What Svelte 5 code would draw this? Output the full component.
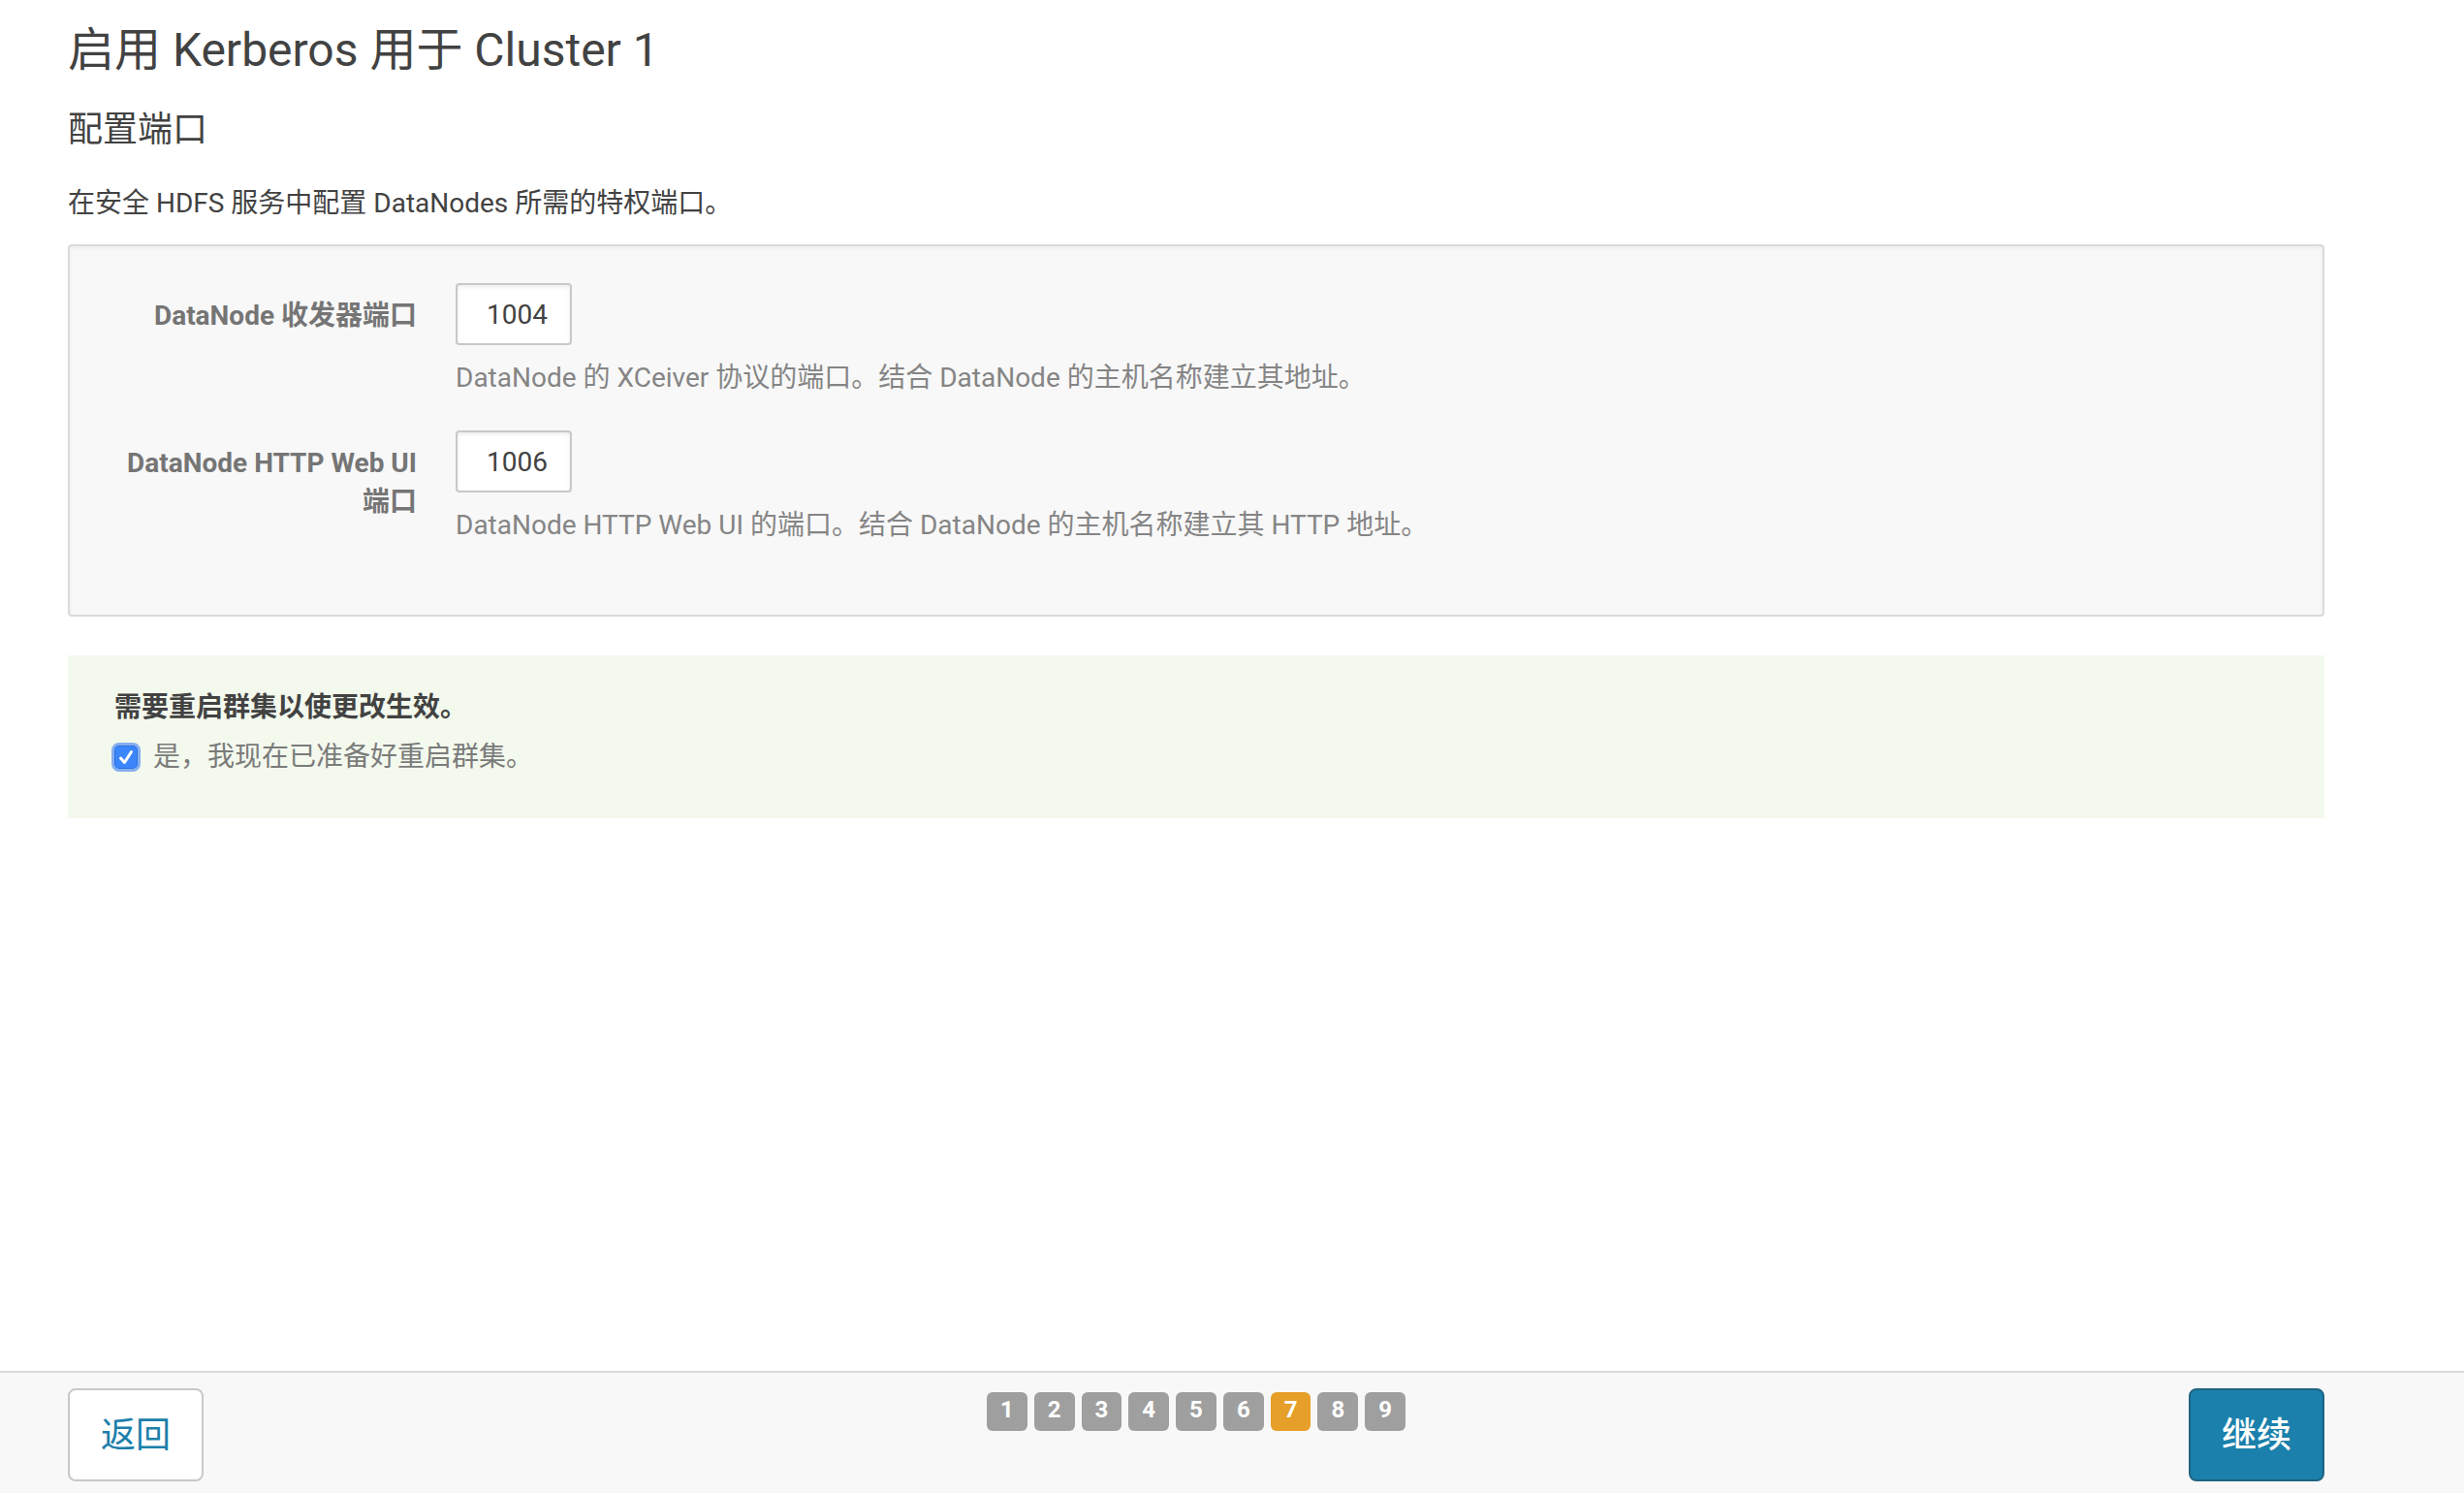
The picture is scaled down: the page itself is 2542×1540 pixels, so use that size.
<script>
  let ports = $state([
    {
      id: 'transceiver-port',
      label: 'DataNode 收发器端口',
      value: '1004',
      help: 'DataNode 的 XCeiver 协议的端口。结合 DataNode 的主机名称建立其地址。'
    },
    {
      id: 'http-port',
      label: 'DataNode HTTP Web UI 端口',
      value: '1006',
      help: 'DataNode HTTP Web UI 的端口。结合 DataNode 的主机名称建立其 HTTP 地址。'
    }
  ]);
  let restart = $state(true);
  const steps = [1, 2, 3, 4, 5, 6, 7, 8, 9];
  const current = 7;
</script>

<div class="wizard">
  <main>
    <h1>启用 Kerberos 用于 Cluster 1</h1>
    <h2>配置端口</h2>
    <p class="intro">在安全 HDFS 服务中配置 DataNodes 所需的特权端口。</p>

    <form class="panel">
      {#each ports as port (port.id)}
        <div class="field">
          <label for={port.id}>{port.label}</label>
          <div class="control">
            <input id={port.id} type="text" bind:value={port.value} aria-describedby="{port.id}-help" />
            <p id="{port.id}-help">{port.help}</p>
          </div>
        </div>
      {/each}
    </form>

    <section class="notice">
      <strong>需要重启群集以使更改生效。</strong>
      <label class="confirm">
        <input type="checkbox" bind:checked={restart} />
        <svg class="tick" viewBox="0 0 30 30" aria-hidden="true">
          <path d="M9.5 16 L13.5 20.5 L20.5 9.5" />
        </svg>
        <span>是，我现在已准备好重启群集。</span>
      </label>
    </section>
  </main>

  <footer>
    <button type="button" class="back">返回</button>
    <ol>
      {#each steps as step}
        <li class:active={step === current} aria-current={step === current ? 'step' : undefined}>{step}</li>
      {/each}
    </ol>
    <button type="button" class="next">继续</button>
  </footer>
</div>

<style>
  :global(body) {
    background: #fff;
  }

  .wizard {
    display: flex;
    flex-direction: column;
    min-height: 100vh;
    box-sizing: border-box;
    color: #424242;
    font: 28px/40px Roboto, "Noto Sans CJK SC", sans-serif;
  }

  main {
    flex: 1;
    padding: 16px 144px 40px 70px;
  }

  h1,
  h2,
  p,
  ol {
    margin: 0;
    padding: 0;
  }

  h1 {
    font-size: 48px;
    line-height: 72px;
    font-weight: 400;
  }

  h2 {
    margin-top: 18px;
    font-size: 36px;
    line-height: 56px;
    font-weight: 400;
  }

  .intro {
    margin: 28px 0 22px;
  }

  .panel {
    display: flex;
    flex-direction: column;
    gap: 34px;
    padding: 38px 38px 72px;
    border: 2px solid #dadada;
    border-radius: 4px;
    background: #f8f8f8;
    box-shadow: inset 0 2px 4px rgba(0, 0, 0, 0.05);
  }

  .field {
    display: flex;
    gap: 40px;
  }

  .field label {
    box-sizing: border-box;
    width: 320px;
    padding-top: 14px;
    color: #757575;
    font-weight: 700;
    text-align: right;
  }

  .control input {
    display: block;
    box-sizing: border-box;
    width: 120px;
    height: 64px;
    padding: 0 20px 0 30px;
    border: 2px solid #c8c8c8;
    border-radius: 4px;
    background: #fff;
    box-shadow: inset 0 2px 4px rgba(0, 0, 0, 0.08);
    color: #424242;
    font: inherit;
  }

  .control p {
    margin-top: 14px;
    color: #858585;
  }

  .notice {
    margin-top: 40px;
    padding: 34px 48px 43px;
    background: #f3f9ed;
  }

  .notice strong {
    display: block;
  }

  .confirm {
    display: grid;
    grid-template-columns: 30px 1fr;
    column-gap: 13px;
    align-items: center;
    width: fit-content;
    margin: 11px 0 0 -3px;
    color: #7b7b7b;
  }

  .confirm input,
  .tick {
    grid-area: 1 / 1;
    width: 30px;
    height: 30px;
    margin: 0;
  }

  .confirm input {
    appearance: none;
    box-sizing: border-box;
    border: 3px solid #84aef0;
    border-radius: 8px;
    background: #fff;
  }

  .confirm input:checked {
    background: #3b86fb;
    box-shadow: inset 0 0 0 1px #2f70dd;
  }

  .tick {
    visibility: hidden;
    pointer-events: none;
    fill: none;
    stroke: #fff;
    stroke-width: 3;
    stroke-linecap: round;
    stroke-linejoin: round;
  }

  .confirm input:checked + .tick {
    visibility: visible;
  }

  footer {
    display: flex;
    justify-content: space-between;
    align-items: flex-start;
    padding: 16px 144px 12px 70px;
    border-top: 2px solid #dadada;
    background: #f8f8f8;
  }

  button {
    box-sizing: border-box;
    width: 140px;
    height: 96px;
    padding: 2px 0 0;
    border: 2px solid #c8c8c8;
    border-radius: 8px;
    background: #fff;
    color: #1b7fa9;
    font: inherit;
    font-size: 36px;
    cursor: pointer;
  }

  .next {
    border-color: #1f6481;
    background: #1b80ab;
    color: #fff;
    font-weight: 500;
  }

  ol {
    display: flex;
    gap: 7px;
    margin-top: 4px;
    list-style: none;
  }

  li {
    height: 40px;
    padding: 0 14px;
    border-radius: 6px;
    background: #9f9f9f;
    color: #fff;
    font-size: 24px;
    line-height: 36px;
    font-weight: 700;
  }

  .active {
    background: #e69f28;
  }
</style>
